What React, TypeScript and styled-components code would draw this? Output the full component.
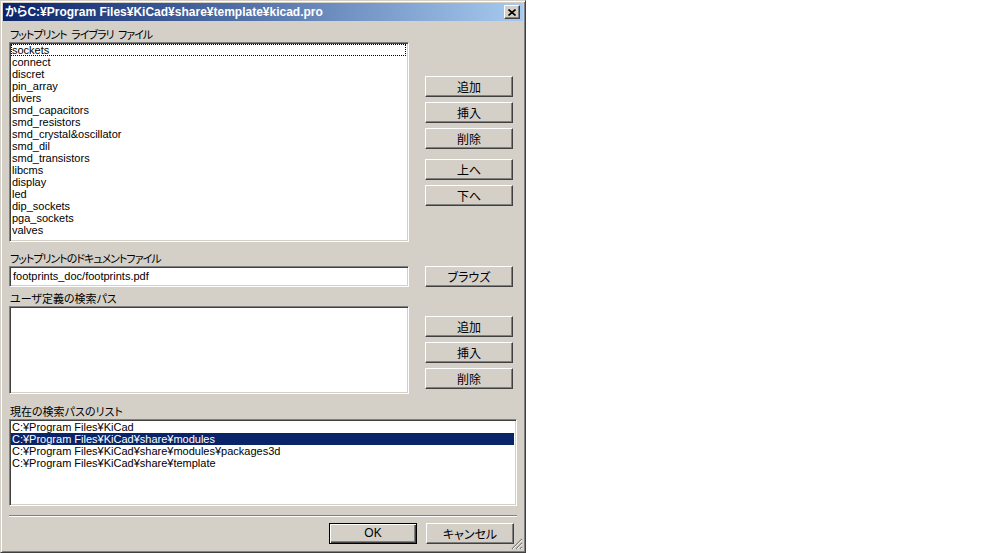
import styled, { createGlobalStyle } from "styled-components"

const GlobalStyle = createGlobalStyle`
	html, body {
		margin: 0;
		padding: 0;
		background: #ffffff;
	}
	body {
		font-family: "Liberation Sans", "Noto Sans CJK JP", sans-serif;
		font-size: 11px;
		color: #000000;
	}
`

const face = "#d4d0c8"

// Outer dialog frame, classic raised border
const Window = styled.div`
	position: relative;
	box-sizing: border-box;
	width: 526px;
	height: 553px;
	padding: 2px;
	background: ${face};
	border: 1px solid;
	border-color: ${face} #404040 #404040 ${face};
	box-shadow: inset 1px 1px #ffffff, inset -1px -1px #808080;
	display: flex;
	flex-direction: column;
`

const TitleBar = styled.div`
	height: 18px;
	display: flex;
	align-items: center;
	background: linear-gradient(to right, #0a246a, #a6caf0);
	padding: 0 2px 0 2px;
`

const TitleText = styled.div`
	flex: 1;
	color: #ffffff;
	font-weight: bold;
	font-size: 12px;
	line-height: 18px;
	white-space: nowrap;
	font-feature-settings: "palt";
`

const CloseButton = styled.div`
	box-sizing: border-box;
	width: 16px;
	height: 14px;
	background: ${face};
	border: 1px solid;
	border-color: #ffffff #404040 #404040 #ffffff;
	box-shadow: inset -1px -1px #808080;
	display: flex;
	align-items: center;
	justify-content: center;
	margin-right: 1px;
`

const Body = styled.div`
	flex: 1;
	display: flex;
	flex-direction: column;
	padding: 5px 6px 0 6px;
`

// Section captions; katakana-heavy ones get tighter spacing
const Label = styled.div<{ $gap?: number; $tight?: boolean }>`
	height: 16px;
	line-height: 16px;
	font-size: 11px;
	font-family: "Noto Sans CJK JP", sans-serif;
	font-feature-settings: "palt";
	letter-spacing: ${(p) => (p.$tight ? "-1px" : "0")};
	word-spacing: ${(p) => (p.$tight ? "3px" : "0")};
	padding-left: 1px;
	margin-top: ${(p) => p.$gap ?? 0}px;
	white-space: pre;
`

const Row = styled.div`
	display: flex;
	align-items: flex-start;
`

const ListBox = styled.div<{ $w: number; $h: number }>`
	box-sizing: border-box;
	width: ${(p) => p.$w}px;
	height: ${(p) => p.$h}px;
	background: #ffffff;
	border: 1px solid;
	border-color: #808080 #ffffff #ffffff #808080;
	box-shadow: inset 1px 1px #404040, inset -1px -1px ${face};
	padding: 1px;
	overflow: hidden;
`

const Item = styled.div<{ $selected?: boolean; $focused?: boolean }>`
	box-sizing: border-box;
	height: 12px;
	line-height: 11px;
	white-space: nowrap;
	background: ${(p) => (p.$selected ? "#0a246a" : "transparent")};
	color: ${(p) => (p.$selected ? "#ffffff" : "#000000")};
	border: 1px ${(p) => (p.$focused ? "dotted #000000" : "solid transparent")};
	border-left-width: 0;
	padding-left: 1px;
	margin-right: 1px;
	${(p) => p.$focused && "border-left: 1px dotted #000000; padding-left: 0;"}
`

const TextInput = styled.div`
	box-sizing: border-box;
	width: 400px;
	height: 21px;
	background: #ffffff;
	border: 1px solid;
	border-color: #808080 #ffffff #ffffff #808080;
	box-shadow: inset 1px 1px #404040, inset -1px -1px ${face};
	padding: 0 3px;
	line-height: 19px;
	white-space: nowrap;
`

const ButtonColumn = styled.div<{ $top: number }>`
	display: flex;
	flex-direction: column;
	gap: 5px;
	margin-left: 16px;
	padding-top: ${(p) => p.$top}px;
`

const Button = styled.div<{ $gap?: number; $default?: boolean }>`
	box-sizing: border-box;
	width: 88px;
	height: 21px;
	background: ${face};
	border: 1px solid;
	border-color: ${(p) => (p.$default ? "#000000" : "#ffffff #404040 #404040 #ffffff")};
	box-shadow: ${(p) =>
		p.$default
			? "inset 1px 1px #ffffff, inset -1px -1px #404040, inset -2px -2px #808080"
			: "inset -1px -1px #808080"};
	margin-top: ${(p) => p.$gap ?? 0}px;
	display: flex;
	align-items: center;
	justify-content: center;
	font-size: 12px;
	font-family: "Liberation Sans", "Noto Sans CJK JP", sans-serif;
	font-feature-settings: "palt";
	padding-bottom: 1px;
`

const Separator = styled.div`
	height: 0;
	margin-top: 9px;
	border-top: 1px solid #808080;
	border-bottom: 1px solid #ffffff;
	width: 508px;
`

const Footer = styled.div`
	display: flex;
	justify-content: flex-end;
	gap: 9px;
	margin-top: 6px;
	padding-right: 3px;
`

const Grip = styled.svg`
	position: absolute;
	right: 2px;
	bottom: 2px;
`

const libraries = [
	"sockets",
	"connect",
	"discret",
	"pin_array",
	"divers",
	"smd_capacitors",
	"smd_resistors",
	"smd_crystal&oscillator",
	"smd_dil",
	"smd_transistors",
	"libcms",
	"display",
	"led",
	"dip_sockets",
	"pga_sockets",
	"valves",
]

const searchPaths = [
	"C:¥Program Files¥KiCad",
	"C:¥Program Files¥KiCad¥share¥modules",
	"C:¥Program Files¥KiCad¥share¥modules¥packages3d",
	"C:¥Program Files¥KiCad¥share¥template",
]

const App = () => {
	return (
		<>
			<GlobalStyle />
			<Window>
				<TitleBar>
					<TitleText>からC:¥Program Files¥KiCad¥share¥template¥kicad.pro</TitleText>
					<CloseButton>
						<svg width="8" height="7" viewBox="0 0 8 7">
							<path d="M0.5 0.5 L7.5 6.5 M7.5 0.5 L0.5 6.5" stroke="#000" strokeWidth="1.6" />
						</svg>
					</CloseButton>
				</TitleBar>

				<Body>
					<Label $tight>フットプリント ライブラリ ファイル</Label>
					<Row>
						<ListBox $w={400} $h={200}>
							{libraries.map((name, i) => (
								<Item key={name} $focused={i === 0}>
									{name}
								</Item>
							))}
						</ListBox>
						<ButtonColumn $top={34}>
							<Button>追加</Button>
							<Button>挿入</Button>
							<Button>削除</Button>
							<Button $gap={5}>上へ</Button>
							<Button>下へ</Button>
						</ButtonColumn>
					</Row>

					<Label $gap={8} $tight>
						フットプリントのドキュメントファイル
					</Label>
					<Row>
						<TextInput>footprints_doc/footprints.pdf</TextInput>
						<ButtonColumn $top={0}>
							<Button>ブラウズ</Button>
						</ButtonColumn>
					</Row>

					<Label $gap={3}>ユーザ定義の検索パス</Label>
					<Row>
						<ListBox $w={400} $h={88} />
						<ButtonColumn $top={10}>
							<Button>追加</Button>
							<Button>挿入</Button>
							<Button>削除</Button>
						</ButtonColumn>
					</Row>

					<Label $gap={9}>現在の検索パスのリスト</Label>
					<ListBox $w={508} $h={87}>
						{searchPaths.map((p, i) => (
							<Item key={p} $selected={i === 1}>
								{p}
							</Item>
						))}
					</ListBox>

					<Separator />
					<Footer>
						<Button $default>OK</Button>
						<Button>キャンセル</Button>
					</Footer>
				</Body>

				<Grip width="12" height="12" viewBox="0 0 12 12">
					<path d="M11 1 L1 11 M11 5 L5 11 M11 9 L9 11" stroke="#808080" strokeWidth="1.2" />
					<path d="M11 2 L2 11 M11 6 L6 11 M11 10 L10 11" stroke="#ffffff" strokeWidth="0.8" />
				</Grip>
			</Window>
		</>
	)
}

export default App
